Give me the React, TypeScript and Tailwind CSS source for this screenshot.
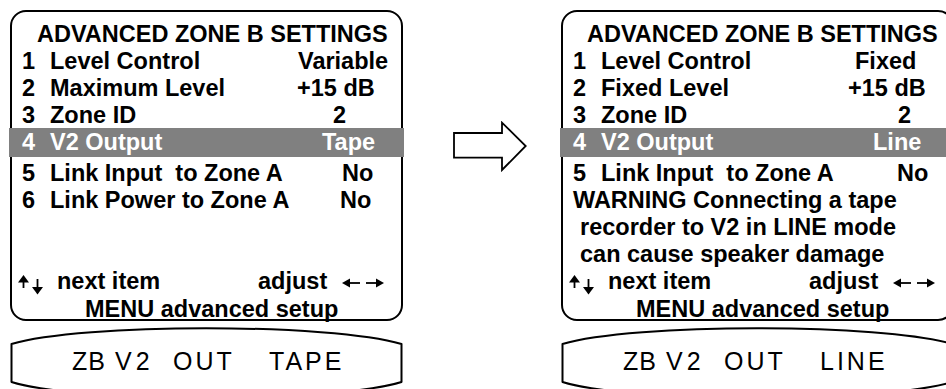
type Row = { n: string; label: string; value: string; vx: string; hl?: boolean };

const leftRows: Row[] = [
  { n: "1", label: "Level Control", value: "Variable", vx: "pl-[13px]" },
  { n: "2", label: "Maximum Level", value: "+15 dB", vx: "pl-[12px]" },
  { n: "3", label: "Zone ID", value: "2", vx: "pl-[48px]" },
  { n: "4", label: "V2 Output", value: "Tape", vx: "pl-[37px]", hl: true },
  { n: "5", label: "Link Input  to Zone A", value: "No", vx: "pl-[57px]" },
  { n: "6", label: "Link Power to Zone A", value: "No", vx: "pl-[55px]" },
];

const rightRows: Row[] = [
  { n: "1", label: "Level Control", value: "Fixed", vx: "pl-[19px]" },
  { n: "2", label: "Fixed Level", value: "+15 dB", vx: "pl-[12px]" },
  { n: "3", label: "Zone ID", value: "2", vx: "pl-[62px]" },
  { n: "4", label: "V2 Output", value: "Line", vx: "pl-[37px]", hl: true },
  { n: "5", label: "Link Input  to Zone A", value: "No", vx: "pl-[61px]" },
];

const MenuRow = ({ row, first }: { row: Row; first?: boolean }) => {
  if (row.hl) {
    return (
      <div className="-mx-[3px] -mt-[1px] flex h-[29px] items-center bg-[#808080] pl-[13px] leading-[27px] text-white">
        <span className="w-[28px]">{row.n}</span>
        <span className="w-[235px] whitespace-pre">{row.label}</span>
        <span className={row.vx}>{row.value}</span>
      </div>
    );
  }
  return (
    <div className={`flex pl-[10px] leading-[27px] ${first ? "mt-[2.5px]" : ""}`}>
      <span className="w-[28px]">{row.n}</span>
      <span className="w-[235px] whitespace-pre">{row.label}</span>
      <span className={row.vx}>{row.value}</span>
    </div>
  );
};

// small up / down arrows before "next item"
const UpDown = () => (
  <svg width="28" height="20" viewBox="0 0 28 20" className="mt-[7px] ml-[5px] shrink-0">
    <path d="M6.5 13 V5" stroke="black" strokeWidth="1.8" />
    <polygon points="1,7.5 6.5,0 12,7.5" fill="black" />
    <path d="M20.5 4 V13" stroke="black" strokeWidth="1.8" />
    <polygon points="15,12 20.5,19.5 26,12" fill="black" />
  </svg>
);

const LeftRight = () => (
  <svg width="42" height="12" viewBox="0 0 42 12" className="mt-[9px] shrink-0">
    <polygon points="0,6 8,1.5 8,10.5" fill="black" />
    <path d="M7 6 H18" stroke="black" strokeWidth="1.8" />
    <path d="M24 6 H35" stroke="black" strokeWidth="1.8" />
    <polygon points="42,6 34,1.5 34,10.5" fill="black" />
  </svg>
);

const Footer = () => (
  <div className="mt-auto -mb-[3.5px]">
    <div className="flex leading-[27px]">
      <UpDown />
      <span className="ml-[12px] w-[201px]">next item</span>
      <span className="w-[84px]">adjust</span>
      <LeftRight />
    </div>
    <div className="mt-[1px] pl-[73px] leading-[27px]">MENU advanced setup</div>
  </div>
);

const Lcd = ({ words }: { words: string[] }) => (
  <div className="relative h-[68px] w-[393px]">
    <svg width="393" height="68" className="absolute inset-0">
      <path
        d="M1.5 23 C 70 2, 322 2, 391.5 23 V 61 C 322 82, 70 82, 1.5 61 Z"
        fill="white"
        stroke="black"
        strokeWidth="2"
        strokeLinejoin="round"
      />
    </svg>
    <div className="relative flex pt-[28px] pl-[62px] font-['Liberation_Sans',Arial,sans-serif] text-[25px] leading-[25px] font-normal tracking-[3px] text-black">
      <span className="w-[43px] tracking-[1px]">{words[0]}</span>
      <span className="w-[58px] tracking-[4px]">{words[1]}</span>
      <span className="w-[96px]">{words[2]}</span>
      <span>{words[3]}</span>
    </div>
  </div>
);

export default function App() {
  return (
    <div className="flex h-[389px] w-[946px] overflow-hidden bg-white font-['Liberation_Sans',Arial,sans-serif] text-[23.5px] font-bold text-black">
      <div className="ml-[10px] w-[393px] shrink-0">
        <div className="mt-[10px] flex h-[311px] flex-col rounded-[16px] border-2 border-black pt-[8px]">
          <div className="pl-[25px] leading-[28px] whitespace-nowrap">ADVANCED ZONE B SETTINGS</div>
          {leftRows.map((r, i) => (
            <MenuRow key={r.n} row={r} first={i === 4} />
          ))}
          <Footer />
        </div>
        <Lcd words={["ZB", "V2", "OUT", "TAPE"]} />
      </div>

      <div className="w-[158px] shrink-0">
        <svg width="76" height="52" viewBox="0 0 76 52" className="mt-[121px] ml-[49px]">
          <polygon
            points="2,12 50,12 50,1.7 73.7,25 50,49 50,36.7 2,36.7"
            fill="white"
            stroke="black"
            strokeWidth="1.8"
          />
        </svg>
      </div>

      <div className="w-[393px] shrink-0">
        <div className="mt-[10px] flex h-[311px] flex-col rounded-[16px] border-2 border-black pt-[8px]">
          <div className="pl-[24px] leading-[28px] whitespace-nowrap">ADVANCED ZONE B SETTINGS</div>
          {rightRows.map((r, i) => (
            <MenuRow key={r.n} row={r} first={i === 4} />
          ))}
          <div className="pl-[10px] leading-[27px] whitespace-nowrap">WARNING Connecting a tape</div>
          <div className="pl-[17px] leading-[27px] whitespace-nowrap">recorder to V2 in LINE mode</div>
          <div className="pl-[17px] leading-[27px] whitespace-nowrap">can cause speaker damage</div>
          <Footer />
        </div>
        <Lcd words={["ZB", "V2", "OUT", "LINE"]} />
      </div>
    </div>
  );
}
